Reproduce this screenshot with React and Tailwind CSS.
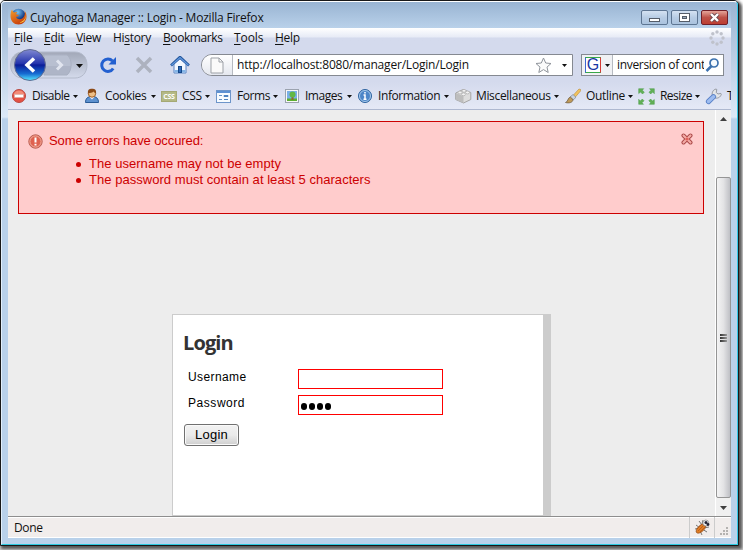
import React from 'react';

const UI = "font-['Open_Sans','Noto_Sans',sans-serif]";

function Caret({ className = '' }) {
  return (
    <svg className={`shrink-0 ${className}`} width="5" height="3" viewBox="0 0 5 3">
      <path d="M0 0h5L2.500 3z" fill="#111" />
    </svg>
  );
}

function FirefoxIcon() {
  return (
    <svg width="17" height="17" viewBox="0 0 17 17">
      <defs>
        <radialGradient id="globe" cx="0.45" cy="0.25"><stop offset="0" stopColor="#79c6f2" /><stop offset="1" stopColor="#143a86" /></radialGradient>
        <linearGradient id="fox" x1="0" y1="0" x2="0.6" y2="1"><stop offset="0" stopColor="#f3a02c" /><stop offset="1" stopColor="#c73c0c" /></linearGradient>
      </defs>
      <circle cx="8.5" cy="7.8" r="7" fill="url(#globe)" />
      <path d="M2 1.500C1 3 .5 5 .5 8c0 5 3.600 8.500 8 8.500s8-3.500 8-8c0-3-.8-4.500-2.200-6 .8 2 .7 3.500.2 5-.8 2.500-3 4-5.300 3.800C7 11 6 9.800 6.300 8.800l2-.6c.5-.8.4-1.200-.2-1.400L6 6.200c.2-1 .8-1.600 1.600-2.200C6 3.700 4.800 4 4 4.500 3 3.800 2.300 2.800 2 1.500z" fill="url(#fox)" />
      <path d="M15.500 6c.5 4-1.500 7.500-6 8.600 4.500.4 7-3 6-8.600z" fill="#ffe04a" />
    </svg>
  );
}

function DisableIcon() {
  return (
    <svg width="16" height="16" viewBox="0 0 16 16">
      <circle cx="8" cy="8" r="6.500" fill="#e65043" stroke="#b94b45" />
      <path d="M2.500 7a5.600 5.600 0 0111 0z" fill="#f28b78" />
      <rect x="3.500" y="6.500" width="9" height="3" fill="#fff" stroke="#d5a9a4" strokeWidth=".5" />
    </svg>
  );
}
function CookiesIcon() {
  return (
    <svg width="16" height="16" viewBox="0 0 16 16">
      <path d="M1.500 14.500c0-4 2-6 6.500-6s6.500 2 6.500 6z" fill="#5d91cf" stroke="#285a96" />
      <path d="M5.500 9L8 11.500 10.500 9z" fill="#eef" />
      <circle cx="8" cy="5.500" r="3.700" fill="#edbd85" stroke="#a46224" />
      <path d="M4 5.500C3.500 2 5 .8 8 .8s4.600 1.400 4 4.700C10.500 5 10 4 9.800 3.500 8.500 5 6 4.800 4 5.500z" fill="#8c4a16" />
    </svg>
  );
}
function CssIcon() {
  return (
    <div className={`flex h-[11px] w-4 items-center justify-center border border-[#a5a975] bg-[#b4b985] text-[7px] leading-none font-bold tracking-[-0.3px] text-white ${UI}`}>CSS</div>
  );
}
function FormsIcon() {
  return (
    <svg width="16" height="16" viewBox="0 0 16 16">
      <rect x=".5" y="2.500" width="14" height="12" fill="#f7fbff" stroke="#6d95ca" />
      <path d="M1 3h13v2H1z" fill="#5e91d3" />
      <path d="M3 7.500h3M3 11.500h3" stroke="#6491c6" />
      <path d="M8 7.500h4v1H8zM8 11.500h4" fill="none" stroke="#4f83c1" />
    </svg>
  );
}
function ImagesIcon() {
  return (
    <svg width="15" height="15" viewBox="0 0 15 15">
      <rect x=".5" y=".5" width="13" height="13" fill="#f8f8f8" stroke="#9ba3af" />
      <path d="M2 2h10v10H2z" fill="#79afe8" /><path d="M2 9.500h10V12H2z" fill="#5daf32" />
      <path d="M6.500 7h2v4h-2z" fill="#916b28" /><circle cx="7.500" cy="5.500" r="3" fill="#62b844" />
    </svg>
  );
}
function InfoIcon() {
  return (
    <svg width="16" height="16" viewBox="0 0 16 16">
      <circle cx="8" cy="8" r="6.500" fill="#4d86c8" stroke="#2e639f" />
      <circle cx="8" cy="8" r="5.500" fill="none" stroke="#a6c8e9" />
      <path d="M8 4v1.500M6.500 7H8v4M6.500 11.200h3" stroke="#fff" strokeWidth="1.500" fill="none" />
    </svg>
  );
}
function BrickIcon() {
  return (
    <svg width="17" height="16" viewBox="0 0 17 16">
      <path d="M.7 5L8 1.500l7.800 3v7L8.500 15l-7.800-3.500z" fill="#ddd" stroke="#a5a5a5" />
      <path d="M1 5l7.500 3.300V15L1 11.500z" fill="#bdbdbd" />
      <g fill="#f2f2f2" stroke="#aaa" strokeWidth=".7"><ellipse cx="5" cy="4.500" rx="2" ry="1.400" /><ellipse cx="9" cy="2.800" rx="2" ry="1.400" /><ellipse cx="8.500" cy="6.300" rx="2" ry="1.400" /><ellipse cx="12.500" cy="4.500" rx="2" ry="1.400" /></g>
    </svg>
  );
}
function BrushIcon() {
  return (
    <svg width="16" height="16" viewBox="0 0 16 16">
      <path d="M8 7.500L14 1l1.700.5v1.300l-6 7z" fill="#f2c35f" stroke="#b98a34" strokeWidth=".6" />
      <path d="M8 6.500l3 2.800-3 2.700-3-3z" fill="#c9d2de" stroke="#6a7a90" strokeWidth=".6" />
      <path d="M.5 14.500c2.500-.5 2-4.500 4.800-5.500l2.700 2.500c0 3-4 4-7.500 3z" fill="#c09a58" stroke="#66553a" strokeWidth=".7" />
    </svg>
  );
}
function ResizeIcon() {
  return (
    <svg width="17" height="17" viewBox="0 0 17 17" fill="#62b057" stroke="#469a44" strokeWidth=".5">
      <path d="M.7.7h5L4.300 2.200l2 2-1.800 1.800-2-2L.7 5.500z" />
      <path d="M16.300.7v5L14.700 4l-2 2L11 4.200l2-2L11.500.7z" />
      <path d="M.7 16.300v-5L2.300 13l2-2L6 12.800l-2 2 1.500 1.500z" />
      <path d="M16.300 16.300h-5l1.500-1.500-2-2 1.800-1.800 2 2 1.700-1.500z" />
    </svg>
  );
}
function WrenchIcon() {
  return (
    <svg width="17" height="17" viewBox="0 0 17 17">
      <path d="M7.500 8.500c-1-3.500 0-6.500 3.500-7.500l.8.5-.6 3L13 6l2.800-.6.500.8c-.8 3.300-3.800 4.500-7 3.800z" fill="#e3e5e8" stroke="#8c919a" strokeWidth=".9" />
      <path d="M3.500 13.500l5-4.800" stroke="#5a82c8" strokeWidth="5.200" strokeLinecap="round" />
      <path d="M3.500 13.500l5-4.800" stroke="#9dbcf0" strokeWidth="3.400" strokeLinecap="round" />
    </svg>
  );
}

function ToolbarItem({ icon, label, width, iconWidth, textClass }) {
  return (
    <div className={`flex h-full shrink-0 items-center ${width}`}>
      <div className={`flex shrink-0 items-center ${iconWidth}`}>{icon}</div>
      <span className={`shrink-0 whitespace-nowrap ${textClass}`}>{label}</span>
      <Caret />
    </div>
  );
}

function MenuItem({ before = '', hot, after, width, tracking }) {
  return (
    <div className={`shrink-0 whitespace-nowrap ${width} ${tracking}`}>
      {before}<span className="underline underline-offset-2">{hot}</span>{after}
    </div>
  );
}

function TitleBar() {
  return (
    <div className="flex h-[26px] shrink-0 items-start bg-linear-to-b from-[#99b4d2] to-[#b9d1ea]">
      <div className="ml-[2px] mt-[6px] w-5"><FirefoxIcon /></div>
      <div className="mt-[7px] flex-1 whitespace-nowrap leading-[18px] tracking-[-0.2px]">Cuyahoga Manager :: Login - Mozilla Firefox</div>
      <div className="mr-[3px] mt-[8px] flex gap-[3px]">
        <div className="flex h-[15px] w-[27px] items-center justify-center rounded-[2px] border border-[#5d7592] bg-linear-to-b from-[#d4e2f2] via-[#b7cce4] to-[#abc3de]">
          <div className="mt-[5px] h-[4px] w-[11px] border border-[#555d69] bg-white" />
        </div>
        <div className="flex h-[15px] w-[27px] items-center justify-center rounded-[2px] border border-[#5d7592] bg-linear-to-b from-[#d4e2f2] via-[#b7cce4] to-[#abc3de]">
          <svg width="11" height="9" viewBox="0 0 11 9"><rect x=".5" y=".5" width="10" height="8" fill="#fff" stroke="#555d69" /><rect x="3.500" y="3.500" width="4" height="2" fill="#9ab" stroke="#555d69" /></svg>
        </div>
        <div className="flex h-[15px] w-[27px] items-center justify-center rounded-[2px] border border-[#701f28] bg-linear-to-b from-[#e4a49a] via-[#bd5148] to-[#bd3d31]">
          <svg width="11" height="9" viewBox="0 0 11 9"><path d="M2 1l7 7M9 1L2 8" stroke="#6a4850" strokeWidth="4" /><path d="M2 1l7 7M9 1L2 8" stroke="#fff" strokeWidth="2.400" /></svg>
        </div>
      </div>
    </div>
  );
}

function MenuBar() {
  return (
    <div className="flex h-5 shrink-0 items-center bg-linear-to-b from-white from-0% via-[#e7ebf6] via-45% to-[#d4daed] to-50% pl-[6px] leading-5">
      <MenuItem hot="F" after="ile" width="w-[30px]" tracking="tracking-[-0.1px]" />
      <MenuItem hot="E" after="dit" width="w-[32px]" tracking="tracking-[-0.3px]" />
      <MenuItem hot="V" after="iew" width="w-[37px]" tracking="tracking-[-0.3px]" />
      <MenuItem before="Hi" hot="s" after="tory" width="w-[50px]" tracking="tracking-[-0.3px]" />
      <MenuItem hot="B" after="ookmarks" width="w-[71px]" tracking="tracking-[-0.42px]" />
      <MenuItem hot="T" after="ools" width="w-[41px]" tracking="tracking-[-0.1px]" />
      <MenuItem hot="H" after="elp" width="w-[60px]" tracking="tracking-[-0.3px]" />
      <svg className="ml-auto mr-[6px]" width="16" height="16" viewBox="0 0 16 16" fill="#bfc2cb">
        <circle cx="8" cy="2" r="1.700" /><circle cx="12.200" cy="3.800" r="1.700" /><circle cx="14" cy="8" r="1.700" /><circle cx="12.200" cy="12.200" r="1.700" /><circle cx="8" cy="14" r="1.700" /><circle cx="3.800" cy="12.200" r="1.700" /><circle cx="2" cy="8" r="1.700" /><circle cx="3.800" cy="3.800" r="1.700" />
      </svg>
    </div>
  );
}

function NavBar() {
  return (
    <div className="flex h-[34px] shrink-0 items-center bg-[#d4daed]">
      <svg className="ml-[2px] shrink-0" width="79" height="34" viewBox="0 0 79 34">
        <defs>
          <linearGradient id="well" x1="0" y1="0" x2="0" y2="1"><stop offset="0" stopColor="#a2a8b8" /><stop offset=".5" stopColor="#bac1d2" /><stop offset="1" stopColor="#d4daeb" /></linearGradient>
          <linearGradient id="back" x1="0" y1="0" x2="0" y2="1"><stop offset="0" stopColor="#8189d2" /><stop offset=".45" stopColor="#2434ad" /><stop offset=".5" stopColor="#0b1c98" /><stop offset=".78" stopColor="#176bd1" /><stop offset="1" stopColor="#57eaff" /></linearGradient>
        </defs>
        <path d="M13 4h52c7 0 12 5 12 13s-5 13-12 13H13C5 30 .5 24 .5 17S5 4 13 4z" fill="url(#well)" stroke="#b3bacb" />
        <path d="M34 7h23c6 4 5 16 0 20H34z" fill="#b8bfd0" stroke="#aab1c2" />
        <path d="M34 18h27c0 4-2 7-4 9H34z" fill="#a7afc1" opacity=".6" />
        <circle cx="20" cy="17" r="15.500" fill="url(#back)" stroke="#616b92" />
        <path d="M24 10.500L17 17l7 6.500" fill="none" stroke="#fff" strokeWidth="3.500" />
        <path d="M47 12.500l4.500 4.500-4.500 4.500" fill="none" stroke="#e1e5ef" strokeWidth="3" />
        <path d="M66 16h7l-3.500 4z" fill="#111" />
      </svg>
      <svg className="ml-[10px] shrink-0" width="18" height="18" viewBox="0 0 18 18">
        <path d="M14.200 12.500a6.200 6.200 0 11-.7-7.500" fill="none" stroke="#2360d0" strokeWidth="3" />
        <path d="M17 1v7.500H9.500z" fill="#2360d0" />
      </svg>
      <svg className="ml-[18px] shrink-0" width="18" height="18" viewBox="0 0 18 18"><path d="M2 2l14 14M16 2L2 16" stroke="#adb2bf" strokeWidth="3.500" /></svg>
      <svg className="ml-[17px] shrink-0" width="20" height="18" viewBox="0 0 20 18">
        <path d="M4 8v9h12V8l-6-5z" fill="#f2f7ff" stroke="#5b83c3" />
        <path d="M1 9.500L10 1l9 8.500" fill="none" stroke="#23569c" strokeWidth="2.600" />
        <path d="M1.500 9.300L10 1.500l8.500 7.800" fill="none" stroke="#6198df" strokeWidth="1.200" />
        <path d="M4.500 14h11v2.500h-11z" fill="#84b5e6" /><rect x="8.500" y="10.500" width="3" height="6" fill="#2e69b8" stroke="#144889" />
      </svg>
      <div className="ml-[11px] flex h-[22px] w-[372px] shrink-0 items-center rounded-l-[11px] border border-[#858991] bg-white">
        <div className="flex h-full w-[31px] shrink-0 items-center justify-center rounded-l-[10px] border-r border-[#b6bac1] bg-linear-to-b from-white to-[#e5e8ef]">
          <svg width="14" height="17" viewBox="0 0 14 17"><path d="M1 1h8l4 4v11H1z" fill="#fafafa" stroke="#9da1a7" /><path d="M9 1v4h4" fill="none" stroke="#9da1a7" /></svg>
        </div>
        <div className="ml-[4px] flex-1 whitespace-nowrap tracking-[-0.2px]">http://localhost:8080/manager/Login/Login</div>
        <svg width="17" height="17" viewBox="0 0 17 17"><path d="M8.500 1l2.200 5 5.300.5-4 3.600 1.200 5.400-4.700-2.900-4.700 2.900L5 10.100 1 6.500 6.300 6z" fill="#fbfbfb" stroke="#8f949b" /></svg>
        <Caret className="ml-[10px] mr-[5px]" />
      </div>
      <div className="ml-2 flex h-[22px] w-[143px] shrink-0 items-center border border-[#858991] bg-white">
        <div className="flex h-full w-[31px] shrink-0 items-center border-r border-[#b6bac1] bg-[#f0f1f4]">
          <div className="ml-[3px] flex h-4 w-4 items-center justify-center border border-t-[#39a849] border-r-[#d43b36] border-b-[#39a849] border-l-[#3e67d1] bg-white font-['Liberation_Sans',sans-serif] text-[16px] leading-none text-[#1739a5]">G</div>
          <Caret className="ml-[4px]" />
        </div>
        <div className="ml-[4px] w-[87px] shrink-0 overflow-hidden whitespace-nowrap tracking-[-0.32px]">inversion of control</div>
        <svg className="ml-px shrink-0" width="16" height="16" viewBox="0 0 16 16"><path d="M6.500 9L1.500 14" stroke="#3d72af" strokeWidth="2.500" /><circle cx="9" cy="6" r="4" fill="#f6fbff" stroke="#3d72af" strokeWidth="1.700" /></svg>
      </div>
    </div>
  );
}

function DevToolbar() {
  return (
    <div className="flex h-[28px] shrink-0 items-center overflow-hidden border-b border-[#aeb8d0] bg-linear-to-b from-[#d4daed] to-[#e5e9f6] pl-[3px] pt-px">
      <ToolbarItem icon={<DisableIcon />} label="Disable" width="w-[73px]" iconWidth="w-[21px]" textClass="w-[41px] tracking-[-0.55px]" />
      <ToolbarItem icon={<CookiesIcon />} label="Cookies" width="w-[77px]" iconWidth="w-[21px]" textClass="w-[46px] tracking-[-0.35px]" />
      <ToolbarItem icon={<CssIcon />} label="CSS" width="w-[55px]" iconWidth="w-[21px]" textClass="w-[23px] tracking-[-0.3px]" />
      <ToolbarItem icon={<FormsIcon />} label="Forms" width="w-[69px]" iconWidth="w-[21px]" textClass="w-[36px] tracking-[-0.45px]" />
      <ToolbarItem icon={<ImagesIcon />} label="Images" width="w-[72px]" iconWidth="w-[20px]" textClass="w-[42px] tracking-[-0.5px]" />
      <ToolbarItem icon={<InfoIcon />} label="Information" width="w-[98px]" iconWidth="w-[21px]" textClass="w-[66px] tracking-[-0.4px]" />
      <ToolbarItem icon={<BrickIcon />} label="Miscellaneous" width="w-[110px]" iconWidth="w-[21px]" textClass="w-[78px] tracking-[-0.35px]" />
      <ToolbarItem icon={<BrushIcon />} label="Outline" width="w-[73px]" iconWidth="w-[21px]" textClass="w-[42px] tracking-[-0.3px]" />
      <ToolbarItem icon={<ResizeIcon />} label="Resize" width="w-[67px]" iconWidth="w-[22px]" textClass="w-[35px] tracking-[-0.55px]" />
      <div className="flex w-[22px] shrink-0"><WrenchIcon /></div>
      <span>T</span>
    </div>
  );
}

function ErrorItem({ children }) {
  return (
    <li className="flex items-center gap-[8px]">
      <i className="size-[5px] rounded-full bg-[#c00]" />{children}
    </li>
  );
}

function ErrorBox() {
  return (
    <div className="ml-[10px] mt-[11px] flex h-[93px] w-[686px] shrink-0 items-start border border-[#c00] bg-[#fcc] text-[#c00]">
      <svg className="ml-[9px] mt-[12px]" width="15" height="15" viewBox="0 0 15 15">
        <circle cx="7.500" cy="7.500" r="6.700" fill="#df6250" stroke="#b96055" />
        <circle cx="7.500" cy="7.500" r="5.600" fill="none" stroke="#efb09f" />
        <path d="M7.500 3.500v5M7.500 9.800v1.800" stroke="#fff" strokeWidth="2" />
      </svg>
      <div className="ml-[6px] mt-[11px] flex-1 text-[13px] leading-4 tracking-[0.04px]">
        <div className="tracking-[-0.1px]">Some errors have occured:</div>
        <ul className="mt-[7px] pl-[27px]">
          <ErrorItem>The username may not be empty</ErrorItem>
          <ErrorItem>The password must contain at least 5 characters</ErrorItem>
        </ul>
      </div>
      <svg className="mr-[10px] mt-[11px]" width="12" height="12" viewBox="0 0 12 12">
        <path d="M2.500 2.500l7 7M9.500 2.500l-7 7" stroke="#a84545" strokeWidth="4" strokeLinecap="round" />
        <path d="M2.500 2.500l7 7M9.500 2.500l-7 7" stroke="#f3aba6" strokeWidth="2.200" strokeLinecap="round" />
        <circle cx="6" cy="6" r="1.600" fill="#df625c" />
      </svg>
    </div>
  );
}

function LoginPanel() {
  return (
    <div className="ml-[164px] mt-[100px] flex h-[202px] w-[379px] shrink-0 flex-col border border-r-8 border-[#ccc] bg-white pl-[10px] text-black">
      <h1 className="mt-[15px] h-[26px] font-['Open_Sans',sans-serif] text-[20px] leading-[25px] font-bold tracking-[-0.9px] text-[#333]">Login</h1>
      <div className="mt-[13px] flex h-5 items-start">
        <label className="ml-[5px] w-[110px] text-[12px] leading-[17px] tracking-[0.4px]">Username</label>
        <div className="h-5 w-[145px] border border-[#f00] bg-white" />
      </div>
      <div className="mt-[6px] flex h-5 items-start">
        <label className="ml-[5px] w-[110px] text-[12px] leading-[17px] tracking-[0.55px]">Password</label>
        <div className="flex h-5 w-[145px] items-center gap-[2px] border border-[#f00] bg-white pl-[2px] pt-[3px]">
          <i className="h-[7px] w-[6px] rounded-full bg-black" /><i className="h-[7px] w-[6px] rounded-full bg-black" /><i className="h-[7px] w-[6px] rounded-full bg-black" /><i className="h-[7px] w-[6px] rounded-full bg-black" />
        </div>
      </div>
      <button className="ml-px mt-[9px] h-[22px] w-[55px] rounded-[3px] border border-[#707070] bg-linear-to-b from-[#f2f2f2] from-0% via-[#ebebeb] via-50% to-[#cfcfcf] text-[13px] leading-5 tracking-[0.2px] shadow-[inset_0_0_0_1px_#fafafa]">Login</button>
    </div>
  );
}

function ScrollBar() {
  return (
    <div className="flex w-4 shrink-0 flex-col items-center border-l border-white bg-[#f0f0f0]">
      <svg className="mt-[7px] shrink-0" width="7" height="4" viewBox="0 0 7 4"><path d="M0 4l3.500-4L7 4z" fill="#404040" /></svg>
      <div className="mt-[56px] flex h-[321px] w-[15px] shrink-0 flex-col items-center justify-center gap-px rounded-[2px] border border-[#959595] bg-linear-to-r from-[#f4f4f4] via-[#e3e3e5] to-[#bfc0c5]">
        <i className="h-[2px] w-[7px] bg-linear-to-r from-[#333] to-[#999]" /><i className="h-[2px] w-[7px] bg-linear-to-r from-[#333] to-[#999]" /><i className="h-[2px] w-[7px] bg-linear-to-r from-[#333] to-[#999]" />
      </div>
      <svg className="mt-[8px] shrink-0" width="7" height="4" viewBox="0 0 7 4"><path d="M0 0h7L3.500 4z" fill="#404040" /></svg>
    </div>
  );
}

function StatusBar() {
  return (
    <div className="flex h-[22px] shrink-0 items-stretch border-t border-[#8e8e8e] bg-[#f1edec] shadow-[inset_0_1px_0_#fff,inset_0_-1px_0_#fff]">
      <div className="flex-1 pl-[6px] leading-[21px] tracking-[-0.35px]">Done</div>
      <div className="flex w-[25px] items-center justify-center border-l border-[#ccc]">
        <svg width="17" height="17" viewBox="0 0 17 17">
          <path d="M2 6l4 3-5 1M5 2l3 4M8 10l5 3M6 12l2 4M2 13l4-2M10 9l5-1M8 5l1-4" fill="none" stroke="#777" />
          <ellipse cx="7" cy="9.500" rx="6" ry="3" transform="rotate(-43 7 9.500)" fill="#e17d23" stroke="#95501d" strokeWidth=".7" />
          <path d="M4 12l6-6M3 10l5-5M6 13l5-5" stroke="#ac541b" strokeWidth=".7" />
          <circle cx="11.800" cy="4" r="3" fill="#eee" stroke="#777" strokeWidth=".6" /><circle cx="12" cy="3.500" r="1.500" fill="#223" /><circle cx="14" cy="5.500" r="1.400" fill="#223" />
        </svg>
      </div>
      <div className="flex w-[17px] items-end justify-end border-l border-[#ccc] pb-[2px] pr-[2px]">
        <svg width="9" height="9" viewBox="0 0 9 9" fill="#b4b2b0"><path d="M6 0h2v2H6zM3 3h2v2H3zM6 3h2v2H6zM0 6h2v2H0zM3 6h2v2H3zM6 6h2v2H6z" /></svg>
      </div>
    </div>
  );
}

export default function App() {
  return (
    <div className={`h-[550px] w-[743px] overflow-hidden bg-linear-to-b from-white to-[#ccc] text-[12px] text-[#111] ${UI}`}>
      <div className="h-[546px] w-[739px] rounded-t-[5px] border border-[#181818] bg-[#b9d1ea] shadow-[2px_2px_3px_1px_#555]">
        <div className="flex h-full flex-col rounded-t-[4px] border border-t-white border-r-[#32c9e8] border-b-[#2cc8df] border-l-[#e2effb] bg-linear-to-b from-[#9bb5d3] from-0% via-[#dce9f7] via-[115px] to-[#b9d1ea] to-[117px] px-[6px]">
          <TitleBar />
          <MenuBar />
          <NavBar />
          <DevToolbar />
          <div className="flex h-[406px] shrink-0 bg-[#ededed] font-['Liberation_Sans',Arial,sans-serif]">
            <div className="flex flex-1 flex-col">
              <ErrorBox />
              <LoginPanel />
            </div>
            <ScrollBar />
          </div>
          <StatusBar />
          <div className="-mx-[6px] flex-1 bg-[#b9d1ea]" />
        </div>
      </div>
    </div>
  );
}
